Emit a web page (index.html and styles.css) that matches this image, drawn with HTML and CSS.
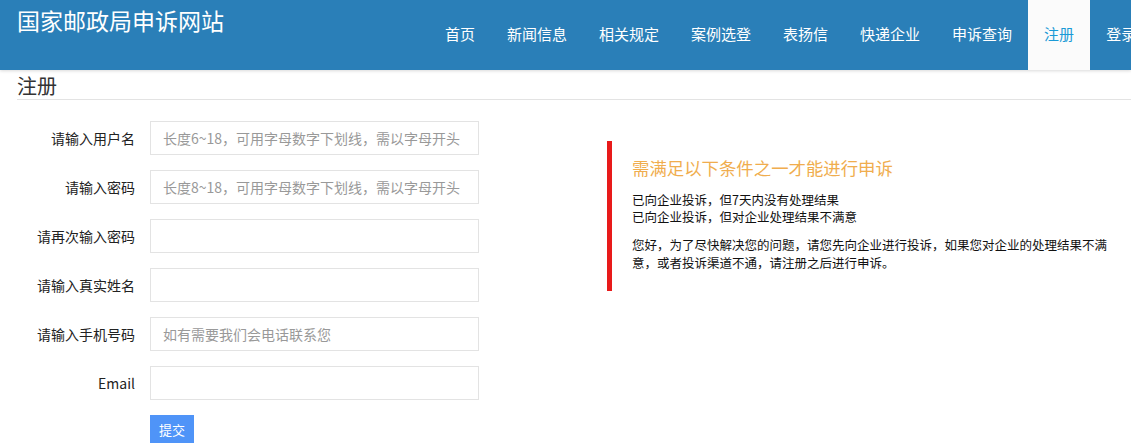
FILE: index.html
```html
<!DOCTYPE html>
<html lang="zh-CN">
<head>
    <meta charset="UTF-8">
    <meta name="viewport" content="width=device-width, initial-scale=1.0">
    <title>注册 - 国家邮政局申诉网站</title>
    <link rel="stylesheet" href="styles.css">
</head>
<body>
    <header class="topbar">
        <div class="brand">国家邮政局申诉网站</div>
        <nav class="nav">
            <a href="#">首页</a>
            <a href="#">新闻信息</a>
            <a href="#">相关规定</a>
            <a href="#">案例选登</a>
            <a href="#">表扬信</a>
            <a href="#">快递企业</a>
            <a href="#">申诉查询</a>
            <a href="#" class="active">注册</a>
            <a href="#">登录</a>
        </nav>
    </header>

    <main class="page">
        <h2 class="page-title">注册</h2>
        <div class="content">
            <form class="reg-form">
                <div class="row">
                    <label>请输入用户名</label>
                    <input type="text" placeholder="长度6~18，可用字母数字下划线，需以字母开头">
                </div>
                <div class="row">
                    <label>请输入密码</label>
                    <input type="password" placeholder="长度8~18，可用字母数字下划线，需以字母开头">
                </div>
                <div class="row">
                    <label>请再次输入密码</label>
                    <input type="password">
                </div>
                <div class="row">
                    <label>请输入真实姓名</label>
                    <input type="text">
                </div>
                <div class="row">
                    <label>请输入手机号码</label>
                    <input type="text" placeholder="如有需要我们会电话联系您">
                </div>
                <div class="row">
                    <label>Email</label>
                    <input type="text">
                </div>
                <div class="row">
                    <label></label>
                    <button type="button" class="btn-submit">提交</button>
                </div>
            </form>

            <div class="notice">
                <h3>需满足以下条件之一才能进行申诉</h3>
                <ul>
                    <li>已向企业投诉，但7天内没有处理结果</li>
                    <li>已向企业投诉，但对企业处理结果不满意</li>
                </ul>
                <p>您好，为了尽快解决您的问题，请您先向企业进行投诉，如果您对企业的处理结果不满意，或者投诉渠道不通，请注册之后进行申诉。</p>
            </div>
        </div>
    </main>
</body>
</html>
```

FILE: styles.css
```css
body {
    margin: 0;
    font-family: "Noto Sans CJK SC", "Liberation Sans", sans-serif;
    color: #222;
    background-color: #fff;
    overflow: hidden;
}
.topbar {
    display: flex;
    height: 70px;
    padding-left: 17px;
    background-color: #2a7fb8;
    box-shadow: 0 1px 3px rgba(0,0,0,0.15);
    overflow: hidden;
}
.brand {
    flex: 0 0 412px;
    padding-top: 6px;
    font-size: 23px;
    line-height: 28px;
    color: #fff;
}
.nav {
    display: flex;
    flex-shrink: 0;
}
.nav a {
    padding: 0 16px;
    font-size: 15px;
    line-height: 68px;
    color: #fff;
    text-decoration: none;
}
.nav a.active {
    background-color: #fbfbfb;
    color: #1a9ad6;
}
.page {
    padding-left: 17px;
}
.page-title {
    margin: 2px 0 0;
    font-size: 20px;
    font-weight: normal;
    line-height: 27px;
    color: #333;
    border-bottom: 1px solid #e3e3e3;
}
.content {
    display: flex;
    align-items: flex-start;
    padding-top: 21px;
}
.reg-form {
    width: 590px;
}
.row {
    display: flex;
    align-items: center;
    margin-bottom: 15px;
}
.row label {
    width: 118px;
    margin-right: 15px;
    text-align: right;
    font-size: 14px;
    color: #222;
}
.row input {
    box-sizing: border-box;
    width: 329px;
    height: 34px;
    padding: 0 12px;
    border: 1px solid #e3e3e3;
    font-family: inherit;
    font-size: 14px;
    color: #333;
    outline: none;
}
.row input::placeholder {
    color: #999;
}
.btn-submit {
    height: 28px;
    padding: 0 9px;
    border: none;
    background-color: #4f94f8;
    color: #fff;
    font-family: inherit;
    font-size: 13px;
    cursor: pointer;
}
.notice {
    margin-top: 20px;
    padding: 15px 0 19px 20px;
    border-left: 5px solid #e81a1a;
}
.notice h3 {
    margin: 0 0 11px;
    font-size: 17.4px;
    font-weight: normal;
    line-height: 24px;
    color: #f0ad4e;
}
.notice ul {
    margin: 0;
    padding: 0;
    list-style: none;
}
.notice li {
    font-size: 12.5px;
    line-height: 17px;
    color: #111;
}
.notice p {
    width: 480px;
    margin: 11px 0 0;
    font-size: 12.5px;
    line-height: 18px;
    color: #111;
}
```
